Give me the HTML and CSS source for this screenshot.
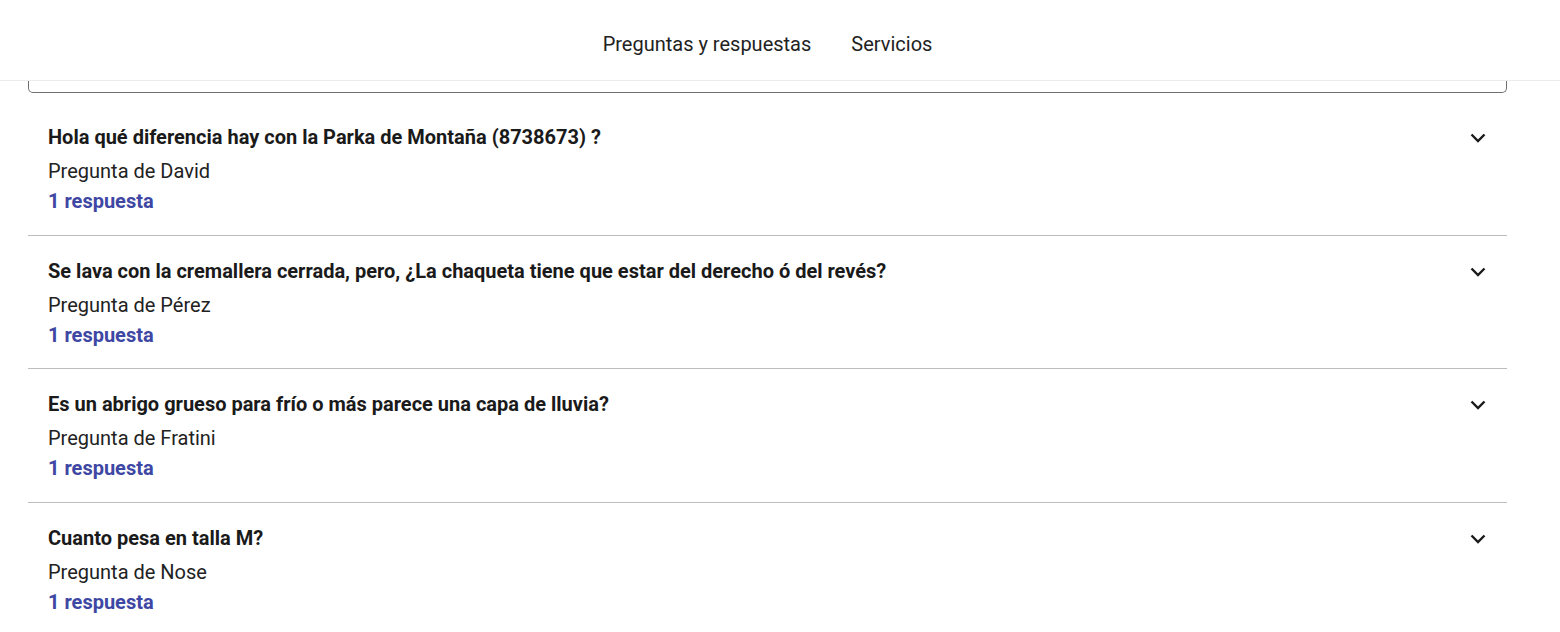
FILE: index.html
```html
<!DOCTYPE html>
<html lang="es">
<head>
<meta charset="utf-8">
<title>Preguntas y respuestas</title>
<link rel="stylesheet" href="styles.css">
</head>
<body>
<header class="topbar">
  <nav class="tabs">
    <a class="tab" href="#">Preguntas y respuestas</a>
    <a class="tab" href="#">Servicios</a>
  </nav>
</header>
<main class="content">
  <div class="search-box"></div>
  <ul class="qa-list">
    <li class="qa-item">
      <div class="qa-text">
        <h3 class="qa-title">Hola qué diferencia hay con la Parka de Montaña (8738673) ?</h3>
        <p class="qa-author">Pregunta de David</p>
        <a class="qa-answers" href="#">1 respuesta</a>
      </div>
      <svg class="chevron" viewBox="0 0 16 10" width="16" height="10"><path d="M1.5 1.5 L8 8 L14.5 1.5" fill="none" stroke="#1a1a1a" stroke-width="2.4"/></svg>
    </li>
    <li class="qa-item">
      <div class="qa-text">
        <h3 class="qa-title">Se lava con la cremallera cerrada, pero, ¿La chaqueta tiene que estar del derecho ó del revés?</h3>
        <p class="qa-author">Pregunta de Pérez</p>
        <a class="qa-answers" href="#">1 respuesta</a>
      </div>
      <svg class="chevron" viewBox="0 0 16 10" width="16" height="10"><path d="M1.5 1.5 L8 8 L14.5 1.5" fill="none" stroke="#1a1a1a" stroke-width="2.4"/></svg>
    </li>
    <li class="qa-item">
      <div class="qa-text">
        <h3 class="qa-title">Es un abrigo grueso para frío o más parece una capa de lluvia?</h3>
        <p class="qa-author">Pregunta de Fratini</p>
        <a class="qa-answers" href="#">1 respuesta</a>
      </div>
      <svg class="chevron" viewBox="0 0 16 10" width="16" height="10"><path d="M1.5 1.5 L8 8 L14.5 1.5" fill="none" stroke="#1a1a1a" stroke-width="2.4"/></svg>
    </li>
    <li class="qa-item">
      <div class="qa-text">
        <h3 class="qa-title">Cuanto pesa en talla M?</h3>
        <p class="qa-author">Pregunta de Nose</p>
        <a class="qa-answers" href="#">1 respuesta</a>
      </div>
      <svg class="chevron" viewBox="0 0 16 10" width="16" height="10"><path d="M1.5 1.5 L8 8 L14.5 1.5" fill="none" stroke="#1a1a1a" stroke-width="2.4"/></svg>
    </li>
  </ul>
</main>
</body>
</html>
```

FILE: styles.css
```css
* { box-sizing: border-box; }
html, body { margin: 0; padding: 0; background: #fff; }
body {
  font-family: Roboto, "Liberation Sans", Arial, sans-serif;
  color: #1a1a1a;
  overflow: hidden;
}
.topbar {
  height: 81px;
  border-bottom: 1px solid #ececec;
  display: flex;
  justify-content: center;
  align-items: flex-start;
}
.tabs {
  display: flex;
  gap: 40px;
  padding-top: 31px;
  margin-right: 25px;
}
.tab {
  font-size: 20px;
  line-height: 26px;
  color: #222;
  text-decoration: none;
}
.content {
  padding: 0 53px 0 28px;
}
.search-box {
  height: 12px;
  border: 1px solid #707070;
  border-top: none;
  border-radius: 0 0 5px 5px;
}
.qa-list {
  list-style: none;
  margin: 9px 0 0;
  padding: 0;
}
.qa-item {
  display: flex;
  justify-content: space-between;
  align-items: flex-start;
  padding: 22px 21px 20.5px 20px;
  border-bottom: 1px solid #bdbdbd;
}
.qa-item:last-child { border-bottom: none; }
.qa-title {
  margin: 0;
  font-size: 20px;
  line-height: 26px;
  font-weight: 700;
  color: #1a1a1a;
}
.qa-author {
  margin: 8px 0 0;
  font-size: 20px;
  line-height: 26px;
  color: #222;
}
.qa-answers {
  display: block;
  margin-top: 4px;
  font-size: 20px;
  line-height: 26px;
  font-weight: 700;
  color: #3e47a3;
  text-decoration: none;
}
.chevron {
  margin-top: 9px;
  flex: none;
}
```
